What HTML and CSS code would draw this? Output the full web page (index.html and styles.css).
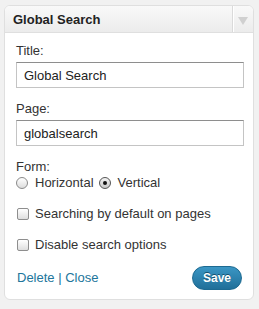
FILE: index.html
```html
<!DOCTYPE html>
<html>
  <head>
    <title>Global Search</title>
    <link rel="stylesheet" href="styles.css">
  </head>
  <body>
    <div class="widget">
      <div class="widget-top">
        <h3>Global Search</h3>
        <div class="toggle"><span class="arrow"></span></div>
      </div>

      <div class="widget-inside">
        <label for="titleInput" class="field-label">Title:</label>
        <input type="text" id="titleInput" class="field" value="Global Search" />

        <label for="pageInput" class="field-label">Page:</label>
        <input type="text" id="pageInput" class="field" value="globalsearch" />

        <div class="form-label">Form:</div>
        <div class="radios">
          <label class="option"><input type="radio" name="form" class="radio" />Horizontal</label>
          <label class="option"><input type="radio" name="form" class="radio" checked />Vertical</label>
        </div>

        <label class="option check-row"><input type="checkbox" class="check" />Searching by default on pages</label>
        <label class="option check-row"><input type="checkbox" class="check" />Disable search options</label>

        <div class="widget-control">
          <div class="links">
            <a href="#">Delete</a> | <a href="#">Close</a>
          </div>
          <button class="save">Save</button>
        </div>
      </div>
    </div>
  </body>
</html>
```

FILE: styles.css
```css
/* Base styles */
body {
  margin: 0;
  padding: 5px 5px 0 4px;
  background: #f1f1f1;
  font-family: "Liberation Sans", Arial, sans-serif;
  font-size: 13px;
  line-height: 16px;
  color: #333;
}

.widget {
  width: 248px;
  border: 1px solid #dfdfdf;
  border-radius: 6px;
  background: #fff;
  overflow: hidden;
}

.widget-top {
  display: flex;
  height: 26px;
  background: linear-gradient(#f9f9f9, #ececec);
  border-bottom: 1px solid #dfdfdf;
}

.widget-top h3 {
  flex: 1;
  margin: 0;
  padding-left: 8px;
  font-size: 13px;
  line-height: 27px;
  color: #222;
}

.toggle {
  width: 20px;
  border-left: 1px solid #dadada;
  box-shadow: inset 1px 0 0 #fff;
  display: flex;
  align-items: center;
  justify-content: center;
}

.arrow {
  width: 0;
  height: 0;
  border-left: 5px solid transparent;
  border-right: 5px solid transparent;
  border-top: 8px solid #d0d0d0;
  margin-top: 3px;
}

.widget-inside {
  padding: 10px 9px 9px 11px;
}

.field-label {
  display: block;
  margin-bottom: 3px;
}

.field {
  display: block;
  box-sizing: border-box;
  width: 228px;
  height: 26px;
  margin: 0 0 13px;
  padding: 0 7px;
  border: 1px solid #c4c4c4;
  border-top-color: #8e8e8e;
  font-family: inherit;
  font-size: 13px;
  color: #222;
}

.radios {
  display: flex;
  gap: 5px;
}

.option {
  display: flex;
  align-items: center;
  gap: 7px;
}

.radio {
  appearance: none;
  width: 12px;
  height: 12px;
  margin: 0;
  border: 1px solid #8a8a8a;
  border-radius: 50%;
  background: linear-gradient(#fff, #dcdcdc);
  box-sizing: border-box;
  position: relative;
}

.radio:checked {
  border-color: #555;
  background: linear-gradient(#f4f4f4, #c8c8c8);
}

.radio:checked::after {
  content: "";
  position: absolute;
  left: 3px;
  top: 3px;
  width: 4px;
  height: 4px;
  border-radius: 50%;
  background: #111;
}

.check-row {
  margin-top: 15px;
  gap: 6px;
}

.check {
  appearance: none;
  width: 12px;
  height: 12px;
  margin: 0 0 0 1px;
  border: 1px solid #8e8e8e;
  border-radius: 2px;
  background: linear-gradient(#fff, #dedede);
  box-sizing: border-box;
}

.widget-control {
  display: flex;
  justify-content: space-between;
  align-items: center;
  margin-top: 13px;
  padding-right: 2px;
}

.links {
  padding-left: 1px;
  color: #21759b;
}

.links a {
  color: #21759b;
  text-decoration: none;
}

.save {
  width: 50px;
  height: 24px;
  border: 1px solid #1d6a91;
  border-radius: 12px;
  background: linear-gradient(#3b96c4, #206f99);
  color: #fff;
  font-family: inherit;
  font-size: 12px;
  font-weight: bold;
  text-shadow: 0 -1px 0 #15506e;
  padding: 0;
}
```
